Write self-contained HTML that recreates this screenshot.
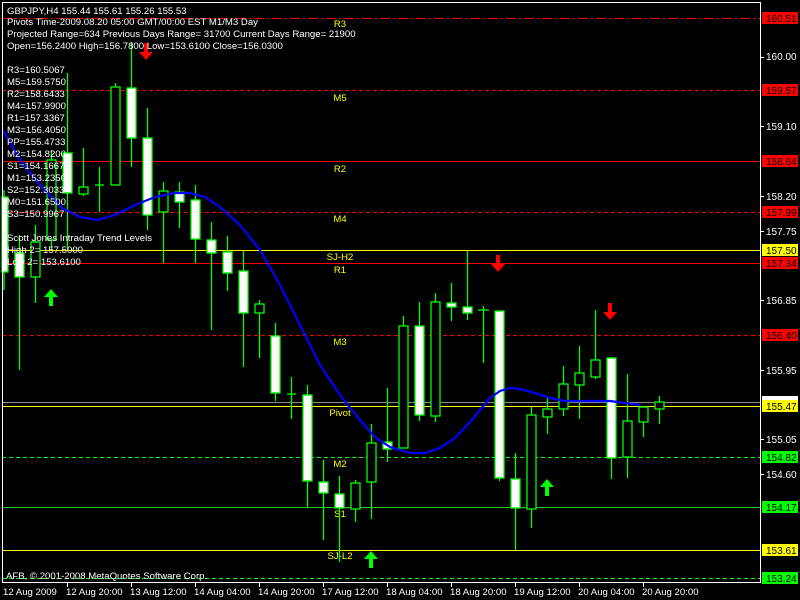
<!DOCTYPE html>
<html><head><meta charset="utf-8"><style>
html,body{margin:0;padding:0;background:#000;width:800px;height:600px;overflow:hidden}
svg{display:block}
text{font-family:"Liberation Sans",sans-serif;font-size:9.6px}
.ax{font-size:10px}
</style></head><body>
<svg width="800" height="600" xmlns="http://www.w3.org/2000/svg">
<rect width="800" height="600" fill="#000"/>
<g stroke-width="1">
<line x1="2" y1="18.5" x2="760" y2="18.5" stroke="#f00" stroke-dasharray="10,3,2,3"/>
<line x1="2" y1="90.5" x2="760" y2="90.5" stroke="#f00" stroke-dasharray="4,3"/>
<line x1="2" y1="161.5" x2="760" y2="161.5" stroke="#f00"/>
<line x1="2" y1="212.5" x2="760" y2="212.5" stroke="#f00" stroke-dasharray="4,3"/>
<line x1="2" y1="250.5" x2="760" y2="250.5" stroke="#ff0"/>
<line x1="2" y1="263.5" x2="760" y2="263.5" stroke="#f00"/>
<line x1="2" y1="335.5" x2="760" y2="335.5" stroke="#f00" stroke-dasharray="4,3"/>
<line x1="2" y1="402.5" x2="760" y2="402.5" stroke="#8a8a8a"/>
<line x1="2" y1="406.5" x2="760" y2="406.5" stroke="#ff0"/>
<line x1="2" y1="457.5" x2="760" y2="457.5" stroke="#0f0" stroke-dasharray="4,3"/>
<line x1="2" y1="507.5" x2="760" y2="507.5" stroke="#2c2"/>
<line x1="2" y1="550.5" x2="760" y2="550.5" stroke="#ff0"/>
<line x1="2" y1="578.5" x2="760" y2="578.5" stroke="#0f0" stroke-dasharray="4,3"/>
</g>
<g fill="#ff0" text-anchor="middle">
<text x="340" y="27">R3</text><text x="340" y="101">M5</text><text x="340" y="172">R2</text>
<text x="340" y="222">M4</text><text x="340" y="260">SJ-H2</text><text x="340" y="273">R1</text>
<text x="340" y="345">M3</text><text x="340" y="416">Pivot</text><text x="340" y="467">M2</text>
<text x="340" y="517">S1</text><text x="340" y="559">SJ-L2</text>
</g>
<g stroke="#0f0" stroke-width="1.3">
<line x1="4" y1="190" x2="4" y2="290"/><rect x="2" y="197" width="6" height="75" fill="#fff"/>
<line x1="19.5" y1="235" x2="19.5" y2="370"/><rect x="15" y="253" width="9" height="24" fill="#fff"/>
<line x1="35.5" y1="225" x2="35.5" y2="303"/><rect x="31" y="242" width="9" height="35" fill="#000"/>
<line x1="51.5" y1="150" x2="51.5" y2="250"/><rect x="47" y="160" width="9" height="80" fill="#000"/>
<line x1="67.5" y1="73" x2="67.5" y2="250"/><rect x="63" y="153" width="9" height="40" fill="#fff"/>
<line x1="83.5" y1="148" x2="83.5" y2="196"/><rect x="79" y="187" width="9" height="7" fill="#000"/>
<line x1="99.5" y1="167" x2="99.5" y2="212"/><line x1="95" y1="185" x2="104" y2="185"/>
<line x1="115.5" y1="83" x2="115.5" y2="185"/><rect x="111" y="87" width="9" height="98" fill="#000"/>
<line x1="131.5" y1="42" x2="131.5" y2="167"/><rect x="127" y="88" width="9" height="50" fill="#fff"/>
<line x1="147.5" y1="108" x2="147.5" y2="230"/><rect x="143" y="138" width="9" height="77" fill="#fff"/>
<line x1="163.5" y1="182" x2="163.5" y2="263"/><rect x="159" y="191" width="9" height="21" fill="#000"/>
<line x1="179.5" y1="182" x2="179.5" y2="228"/><rect x="175" y="192" width="9" height="10" fill="#fff"/>
<line x1="195.5" y1="185" x2="195.5" y2="263"/><rect x="191" y="200" width="9" height="39" fill="#fff"/>
<line x1="211.5" y1="222" x2="211.5" y2="330"/><rect x="207" y="240" width="9" height="13" fill="#fff"/>
<line x1="227.5" y1="236" x2="227.5" y2="291"/><rect x="223" y="252" width="9" height="21" fill="#fff"/>
<line x1="243.5" y1="251" x2="243.5" y2="367"/><rect x="239" y="271" width="9" height="42" fill="#fff"/>
<line x1="259.5" y1="300" x2="259.5" y2="358"/><rect x="255" y="304" width="9" height="9" fill="#000"/>
<line x1="275.5" y1="323" x2="275.5" y2="401"/><rect x="271" y="336" width="9" height="57" fill="#fff"/>
<line x1="291.5" y1="377" x2="291.5" y2="419"/><line x1="287" y1="394" x2="296" y2="394"/>
<line x1="307.5" y1="385" x2="307.5" y2="507"/><rect x="303" y="395" width="9" height="86" fill="#fff"/>
<line x1="323.5" y1="460" x2="323.5" y2="540"/><rect x="319" y="482" width="9" height="11" fill="#fff"/>
<line x1="339.5" y1="476" x2="339.5" y2="562"/><rect x="335" y="494" width="9" height="14" fill="#fff"/>
<line x1="355.5" y1="480" x2="355.5" y2="522"/><rect x="351" y="483" width="9" height="26" fill="#000"/>
<line x1="371.5" y1="424" x2="371.5" y2="519"/><rect x="367" y="443" width="9" height="39" fill="#000"/>
<line x1="387.5" y1="388" x2="387.5" y2="462"/><rect x="383" y="442" width="9" height="7" fill="#fff"/>
<line x1="403.5" y1="316" x2="403.5" y2="448"/><rect x="399" y="326" width="9" height="122" fill="#000"/>
<line x1="419.5" y1="302" x2="419.5" y2="421"/><rect x="415" y="326" width="9" height="89" fill="#fff"/>
<line x1="435.5" y1="293" x2="435.5" y2="422"/><rect x="431" y="302" width="9" height="114" fill="#000"/>
<line x1="451.5" y1="283" x2="451.5" y2="321"/><rect x="447" y="303" width="9" height="4" fill="#fff"/>
<line x1="467.5" y1="251" x2="467.5" y2="320"/><rect x="463" y="307" width="9" height="6" fill="#fff"/>
<line x1="483.5" y1="306" x2="483.5" y2="363"/><line x1="478" y1="310" x2="489" y2="310"/>
<line x1="499.5" y1="311" x2="499.5" y2="481"/><rect x="495" y="311" width="9" height="167" fill="#fff"/>
<line x1="515.5" y1="453" x2="515.5" y2="550"/><rect x="511" y="479" width="9" height="29" fill="#fff"/>
<line x1="531.5" y1="407" x2="531.5" y2="528"/><rect x="527" y="415" width="9" height="94" fill="#000"/>
<line x1="547.5" y1="398" x2="547.5" y2="434"/><rect x="543" y="409" width="9" height="8" fill="#000"/>
<line x1="563.5" y1="366" x2="563.5" y2="416"/><rect x="559" y="384" width="9" height="25" fill="#000"/>
<line x1="579.5" y1="346" x2="579.5" y2="419"/><rect x="575" y="373" width="9" height="12" fill="#000"/>
<line x1="595.5" y1="310" x2="595.5" y2="379"/><rect x="591" y="360" width="9" height="17" fill="#000"/>
<line x1="611.5" y1="357" x2="611.5" y2="479"/><rect x="607" y="358" width="9" height="100" fill="#fff"/>
<line x1="627.5" y1="374" x2="627.5" y2="478"/><rect x="623" y="421" width="9" height="36" fill="#000"/>
<line x1="643.5" y1="406" x2="643.5" y2="437"/><rect x="639" y="407" width="9" height="15" fill="#000"/>
<line x1="659.5" y1="396" x2="659.5" y2="424"/><rect x="655" y="402" width="9" height="7" fill="#000"/>
</g>
<polyline fill="none" stroke="#0000ff" stroke-width="2.2" points="3,130 20,160 40,185 62,208 80,217 97,220 115,215 135,205 155,197 175,193 190,193 205,197 220,207 240,225 260,250 280,285 300,325 320,365 340,395 360,420 375,437 390,447 410,453 425,453 440,448 455,438 470,422 480,410 490,398 500,391 510,388 520,389 535,393 550,398 565,401 580,401 595,401 610,401 625,403 640,405"/>
<g fill="#f00">
<path transform="translate(146,52)" d="M-2,-9H2V0H7L0,8L-7,0H-2Z"/>
<path transform="translate(498,264)" d="M-2,-9H2V0H7L0,8L-7,0H-2Z"/>
<path transform="translate(610,312)" d="M-2,-9H2V0H7L0,8L-7,0H-2Z"/>
</g>
<g fill="#0f0">
<path transform="translate(51,297)" d="M-2,9H2V0H7L0,-8L-7,0H-2Z"/>
<path transform="translate(371,559)" d="M-2,9H2V0H7L0,-8L-7,0H-2Z"/>
<path transform="translate(547,487)" d="M-2,9H2V0H7L0,-8L-7,0H-2Z"/>
</g>
<rect x="2.5" y="2.5" width="758" height="580" fill="none" stroke="#fff" stroke-width="1"/>
<g fill="#fff">
<text x="7" y="14">GBPJPY,H4  155.44 155.61 155.26 155.53</text>
<text x="7" y="25">Pivots Time-2009.08.20 05:00 GMT/00:00 EST M1/M3 Day</text>
<text x="7" y="37">Projected Range=634 Previous Days Range= 31700 Current Days Range= 21900</text>
<text x="7" y="49">Open=156.2400 High=156.7800 Low=153.6100 Close=156.0300</text>
<text x="7" y="73">R3=160.5067</text><text x="7" y="85">M5=159.5750</text><text x="7" y="97">R2=158.6433</text>
<text x="7" y="109">M4=157.9900</text><text x="7" y="121">R1=157.3367</text><text x="7" y="133">M3=156.4050</text>
<text x="7" y="145">PP=155.4733</text><text x="7" y="157">M2=154.8200</text><text x="7" y="169">S1=154.1667</text>
<text x="7" y="181">M1=153.2350</text><text x="7" y="193">S2=152.3033</text><text x="7" y="205">M0=151.6500</text>
<text x="7" y="217">S3=150.9967</text>
<text x="7" y="241">Scott Jones Intraday Trend Levels</text>
<text x="7" y="253">High 2= 157.5000</text><text x="7" y="265">Low 2= 153.6100</text>
<text x="6" y="579">AFB, © 2001-2008 MetaQuotes Software Corp.</text>
</g>
<g fill="#fff" class="ax">
<text class="ax" x="766" y="60">160.00</text><text class="ax" x="766" y="130">159.10</text><text class="ax" x="766" y="200">158.20</text>
<text class="ax" x="766" y="235">157.75</text><text class="ax" x="766" y="304">156.85</text><text class="ax" x="766" y="374">155.95</text>
<text class="ax" x="766" y="443">155.05</text><text class="ax" x="766" y="478">154.60</text>
</g>
<g stroke="#fff"><line x1="761" y1="57.5" x2="764" y2="57.5"/><line x1="761" y1="126.5" x2="764" y2="126.5"/><line x1="761" y1="196.5" x2="764" y2="196.5"/><line x1="761" y1="231.5" x2="764" y2="231.5"/><line x1="761" y1="300.5" x2="764" y2="300.5"/><line x1="761" y1="370.5" x2="764" y2="370.5"/><line x1="761" y1="439.5" x2="764" y2="439.5"/><line x1="761" y1="474.5" x2="764" y2="474.5"/></g>
<rect x="762" y="396" width="36" height="4" fill="#fff"/>
<g>
<rect x="762" y="12" width="36" height="12" fill="#f00"/><rect x="762" y="84" width="36" height="12" fill="#f00"/>
<rect x="762" y="155" width="36" height="12" fill="#f00"/><rect x="762" y="206" width="36" height="12" fill="#f00"/>
<rect x="762" y="244" width="36" height="12" fill="#ff0"/><rect x="762" y="257" width="36" height="12" fill="#f00"/>
<rect x="762" y="329" width="36" height="12" fill="#f00"/><rect x="762" y="400" width="36" height="12" fill="#ff0"/>
<rect x="762" y="451" width="36" height="12" fill="#0f0"/><rect x="762" y="501" width="36" height="12" fill="#0f0"/>
<rect x="762" y="544" width="36" height="12" fill="#ff0"/><rect x="762" y="572" width="36" height="12" fill="#0f0"/>
</g>
<g fill="#000">
<text class="ax" x="766" y="22">160.51</text><text class="ax" x="766" y="94">159.57</text><text class="ax" x="766" y="165">158.64</text>
<text class="ax" x="766" y="216">157.99</text><text class="ax" x="766" y="254">157.50</text><text class="ax" x="766" y="267">157.34</text>
<text class="ax" x="766" y="339">156.40</text><text class="ax" x="766" y="410">155.47</text><text class="ax" x="766" y="461">154.82</text>
<text class="ax" x="766" y="511">154.17</text><text class="ax" x="766" y="554">153.61</text><text class="ax" x="766" y="582">153.24</text>
</g>
<g stroke="#fff"><line x1="67.5" y1="583" x2="67.5" y2="587"/><line x1="131.5" y1="583" x2="131.5" y2="587"/><line x1="195.5" y1="583" x2="195.5" y2="587"/><line x1="259.5" y1="583" x2="259.5" y2="587"/><line x1="323.5" y1="583" x2="323.5" y2="587"/><line x1="387.5" y1="583" x2="387.5" y2="587"/><line x1="451.5" y1="583" x2="451.5" y2="587"/><line x1="515.5" y1="583" x2="515.5" y2="587"/><line x1="579.5" y1="583" x2="579.5" y2="587"/><line x1="643.5" y1="583" x2="643.5" y2="587"/></g>
<g fill="#fff">
<text x="3" y="595">12 Aug 2009</text><text x="66" y="595">12 Aug 20:00</text><text x="130" y="595">13 Aug 12:00</text>
<text x="194" y="595">14 Aug 04:00</text><text x="258" y="595">14 Aug 20:00</text><text x="322" y="595">17 Aug 12:00</text>
<text x="386" y="595">18 Aug 04:00</text><text x="450" y="595">18 Aug 20:00</text><text x="514" y="595">19 Aug 12:00</text>
<text x="578" y="595">20 Aug 04:00</text><text x="642" y="595">20 Aug 20:00</text>
</g>
</svg>
</body></html>
